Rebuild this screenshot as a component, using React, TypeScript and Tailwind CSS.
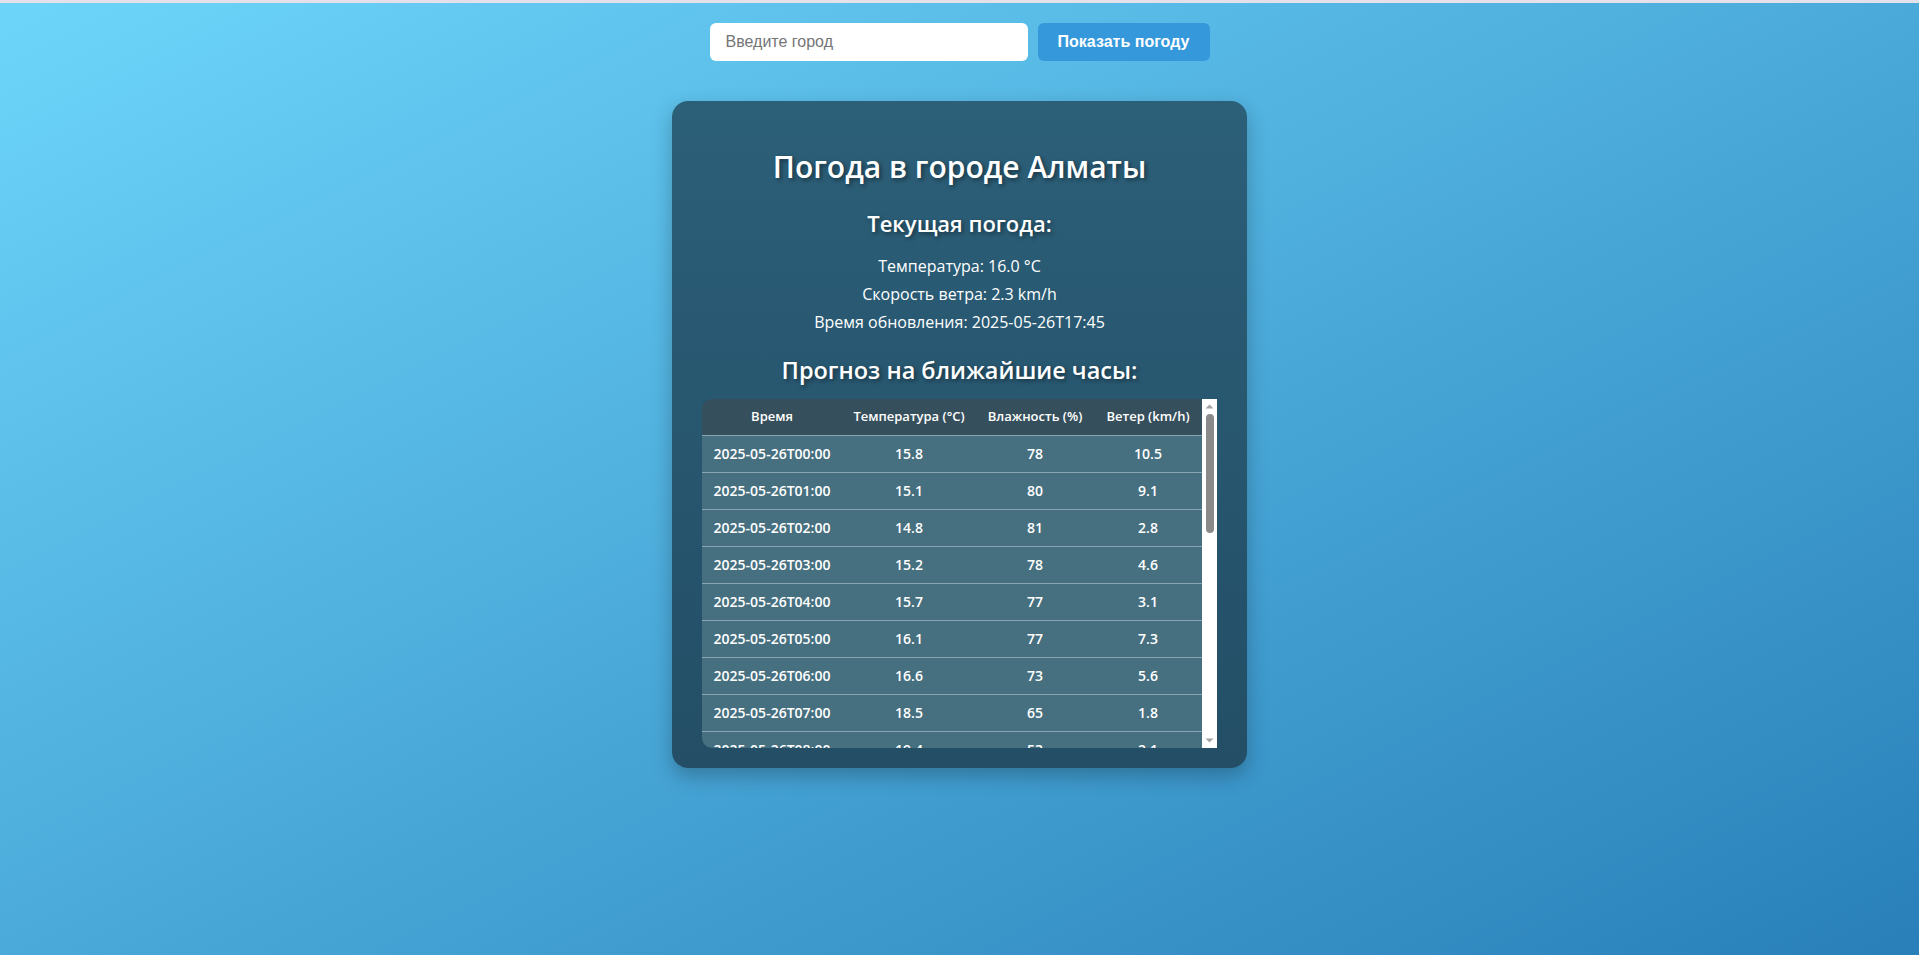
import React from "react";

type Row = { time: string; temp: string; hum: string; wind: string };

const forecast: Row[] = [
  { time: "2025-05-26T00:00", temp: "15.8", hum: "78", wind: "10.5" },
  { time: "2025-05-26T01:00", temp: "15.1", hum: "80", wind: "9.1" },
  { time: "2025-05-26T02:00", temp: "14.8", hum: "81", wind: "2.8" },
  { time: "2025-05-26T03:00", temp: "15.2", hum: "78", wind: "4.6" },
  { time: "2025-05-26T04:00", temp: "15.7", hum: "77", wind: "3.1" },
  { time: "2025-05-26T05:00", temp: "16.1", hum: "77", wind: "7.3" },
  { time: "2025-05-26T06:00", temp: "16.6", hum: "73", wind: "5.6" },
  { time: "2025-05-26T07:00", temp: "18.5", hum: "65", wind: "1.8" },
  { time: "2025-05-26T08:00", temp: "19.4", hum: "53", wind: "2.1" },
  { time: "2025-05-26T09:00", temp: "20.6", hum: "47", wind: "3.4" },
  { time: "2025-05-26T10:00", temp: "21.9", hum: "42", wind: "4.0" },
  { time: "2025-05-26T11:00", temp: "22.8", hum: "38", wind: "5.2" },
  { time: "2025-05-26T12:00", temp: "23.5", hum: "35", wind: "6.1" },
];

const shadow = "[text-shadow:2px_2px_4px_rgba(0,0,0,0.45)]";

// drawn scrollbar, the headless browser hides native ones
function ScrollBar() {
  return (
    <div className="flex w-[15px] shrink-0 flex-col items-center bg-white">
      <svg width="15" height="15" viewBox="0 0 15 15" className="shrink-0">
        <path d="M3.5 9.5 L7.5 5.5 L11.5 9.5 Z" fill="#a3a3a3" />
      </svg>
      <div className="h-[119px] w-[8px] rounded-full bg-[#8a8a8a]" />
      <div className="flex-1" />
      <svg width="15" height="15" viewBox="0 0 15 15" className="shrink-0">
        <path d="M3.5 5.5 L11.5 5.5 L7.5 9.5 Z" fill="#a3a3a3" />
      </svg>
    </div>
  );
}

export default function App() {
  return (
    <div className="min-h-screen bg-linear-to-br from-[#6dd5fa] to-[#2980b9] font-['Open_Sans',sans-serif] text-white">
      <div className="h-[3px] bg-[#e4e1ea]" />

      <form
        className="mt-[20px] flex justify-center gap-[10px]"
        onSubmit={(e) => e.preventDefault()}
      >
        <input
          type="text"
          placeholder="Введите город"
          className="h-[38px] w-[318px] rounded-[6px] bg-white px-4 font-['Liberation_Sans',Arial,sans-serif] text-[16px] text-gray-800 outline-none placeholder:text-[#757575]"
        />
        <button
          type="submit"
          className="h-[38px] w-[172px] rounded-[6px] bg-[#3498db] font-['Liberation_Sans',Arial,sans-serif] text-[16px] font-bold text-white"
        >
          Показать погоду
        </button>
      </form>

      <div className="mx-auto mt-[40px] w-[575px] rounded-[16px] bg-linear-to-b from-[#2c5f78] to-[#234e66] px-[30px] pt-[44px] pb-[20px] shadow-[0_8px_20px_rgba(0,0,0,0.25)]">
        <h1 className={`text-center text-[30px] leading-[44px] font-semibold ${shadow}`}>
          Погода в городе Алматы
        </h1>

        <h2 className={`mt-[18px] text-center text-[22px] leading-[32px] font-semibold ${shadow}`}>
          Текущая погода:
        </h2>
        <div className="mt-[13px] text-center text-[16px] leading-[28px]">
          <p>Температура: 16.0 °C</p>
          <p>Скорость ветра: 2.3 km/h</p>
          <p>Время обновления: 2025-05-26T17:45</p>
        </div>

        <h2 className={`mt-[18px] text-center text-[23.5px] leading-[32px] font-semibold ${shadow}`}>
          Прогноз на ближайшие часы:
        </h2>

        <div className="mt-[13px] flex h-[349px]">
          <div className="flex-1 overflow-y-scroll rounded-l-[10px] bg-[#46707f] [scrollbar-width:none]">
            <table className="w-full table-fixed border-collapse text-center text-[14px] font-semibold">
              <colgroup>
                <col className="w-[140px]" />
                <col className="w-[134px]" />
                <col className="w-[118px]" />
                <col />
              </colgroup>
              <thead>
                <tr className="h-[36px] bg-[#364f5c] text-[13px]">
                  <th className="font-semibold">Время</th>
                  <th className="font-semibold">Температура (°C)</th>
                  <th className="font-semibold">Влажность (%)</th>
                  <th className="font-semibold">Ветер (km/h)</th>
                </tr>
              </thead>
              <tbody>
                {forecast.map((r) => (
                  <tr key={r.time} className="h-[37px] border-t border-[#8ba4b2]">
                    <td>{r.time}</td>
                    <td>{r.temp}</td>
                    <td>{r.hum}</td>
                    <td>{r.wind}</td>
                  </tr>
                ))}
              </tbody>
            </table>
          </div>
          <ScrollBar />
        </div>
      </div>
    </div>
  );
}
